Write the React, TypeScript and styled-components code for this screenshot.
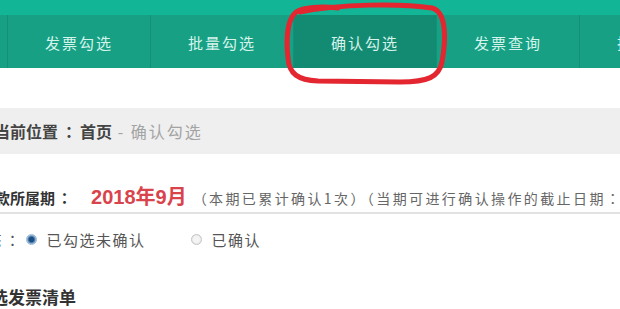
import React from "react";
import styled, { createGlobalStyle } from "styled-components";

const Global = createGlobalStyle`
  html, body { margin: 0; padding: 0; background: #fff; overflow: hidden; }
  body { font-family: "Liberation Sans", "Noto Sans CJK SC", sans-serif; }
`;

const Page = styled.div`
  position: relative;
  width: 620px;
  height: 309px;
  overflow: hidden;
  display: flex;
  flex-direction: column;
`;

const TopStrip = styled.div`
  height: 15px;
  background: #12b596;
`;

const Nav = styled.nav`
  height: 55px;
  display: flex;
  margin-left: -135px;
  background: #17a084;
`;

const NavItem = styled.div<{ $active?: boolean }>`
  flex: 0 0 143px;
  box-sizing: border-box;
  border-right: 1px solid #12907a;
  display: flex;
  align-items: center;
  justify-content: center;
  padding-top: 3px;
  font-family: "Noto Sans CJK SC", sans-serif;
  font-size: 15px;
  letter-spacing: 2px;
  color: #d6f4ec;
  background: ${(p) => (p.$active ? "#138b72" : "transparent")};
`;

const Body = styled.div`
  display: flex;
  flex-direction: column;
  padding-top: 40px;
`;

const Colon = styled.span<{ $space?: number }>`
  font-family: "Noto Sans CJK TC", sans-serif;
  margin: 0 ${(p) => p.$space ?? 2}px;
`;

const Breadcrumb = styled.div`
  height: 46px;
  background: #efefef;
  display: flex;
  align-items: center;
  margin-left: -6px;
  font-family: "Noto Sans CJK SC", sans-serif;
  font-size: 16px;
`;

const Crumb = styled.span<{ $muted?: boolean }>`
  color: ${(p) => (p.$muted ? "#a3a3a3" : "#444")};
  font-weight: ${(p) => (p.$muted ? 400 : 700)};
  white-space: pre;
  letter-spacing: ${(p) => (p.$muted ? "2px" : "0")};
`;

const PeriodRow = styled.div`
  margin-top: 27px;
  height: 24px;
  display: flex;
  align-items: baseline;
  margin-left: -20px;
  white-space: nowrap;
`;

const Label = styled.span`
  font-family: "Noto Sans CJK SC", sans-serif;
  font-weight: 700;
  font-size: 15px;
  color: #333;
`;

const Period = styled.span`
  font-family: "Liberation Sans", "Noto Sans CJK SC", sans-serif;
  font-weight: 700;
  font-size: 20px;
  color: #d9434b;
  margin-left: 17px;
  margin-right: 6px;
`;

const Note = styled.span`
  font-family: "Noto Sans CJK TC", sans-serif;
  font-size: 14px;
  letter-spacing: 2.4px;
  color: #666;
`;

const Divider = styled.div`
  margin-top: 7px;
  height: 2px;
  background: #e2e2e2;
`;

const RadioRow = styled.div`
  margin-top: 13px;
  height: 24px;
  display: flex;
  align-items: center;
  margin-left: -30px;
  font-family: "Noto Sans CJK SC", sans-serif;
  font-size: 15px;
  letter-spacing: 1.5px;
  color: #555;
  white-space: nowrap;
`;

const RadioOption = styled.label<{ $gap: number }>`
  display: flex;
  align-items: center;
  gap: 10px;
  margin-left: ${(p) => p.$gap}px;
`;

const RadioDot = styled.span<{ $checked?: boolean }>`
  width: 11px;
  height: 11px;
  border-radius: 50%;
  box-sizing: border-box;
  border: 1px solid ${(p) => (p.$checked ? "#9bb8d6" : "#c4c4c4")};
  background: ${(p) =>
    p.$checked
      ? "radial-gradient(circle, #1f4f80 0 35%, #5b8fc2 55%, #dbe8f4 80%)"
      : "radial-gradient(circle, #f4f4f4 0 45%, #dcdcdc 100%)"};
`;

const Heading = styled.h3`
  margin: 34px 0 0 -26px;
  height: 24px;
  line-height: 24px;
  font-family: "Noto Sans CJK SC", sans-serif;
  font-size: 17px;
  font-weight: 700;
  color: #333;
  white-space: nowrap;
`;

const Annotation = styled.svg`
  position: absolute;
  left: 0;
  top: 0;
  width: 620px;
  height: 100px;
  pointer-events: none;
`;

const navItems = ["首页", "发票勾选", "批量勾选", "确认勾选", "发票查询", "抵扣统计"];

export default function App() {
  return (
    <Page>
      <Global />
      <TopStrip />
      <Nav>
        {navItems.map((t) => (
          <NavItem key={t} $active={t === "确认勾选"}>
            {t}
          </NavItem>
        ))}
      </Nav>
      <Body>
        <Breadcrumb>
          <Crumb>
            当前位置<Colon $space={3}>：</Colon>首页
          </Crumb>
          <Crumb $muted> - 确认勾选</Crumb>
        </Breadcrumb>
        <PeriodRow>
          <Label>
            税款所属期<Colon>：</Colon>
          </Label>
          <Period>2018年9月</Period>
          <Note>（本期已累计确认1次）（当期可进行确认操作的截止日期：2018年10月15日）</Note>
        </PeriodRow>
        <Divider />
        <RadioRow>
          <span>
            状态<Colon>：</Colon>
          </span>
          <RadioOption $gap={2}>
            <RadioDot $checked />
            已勾选未确认
          </RadioOption>
          <RadioOption $gap={45}>
            <RadioDot />
            已确认
          </RadioOption>
        </RadioRow>
        <Heading>勾选发票清单</Heading>
      </Body>
      <Annotation viewBox="0 0 620 100">
        <path
          d="M 300 12 C 340 4, 400 3, 432 8 C 447 12, 446 40, 442 62 C 439 77, 428 82, 400 82 L 318 81 C 298 80, 289 74, 288 58 C 286 40, 287 20, 296 12 C 303 7, 322 6, 338 8"
          fill="none"
          stroke="#e3262f"
          strokeWidth="5"
          strokeLinecap="round"
        />
      </Annotation>
    </Page>
  );
}
